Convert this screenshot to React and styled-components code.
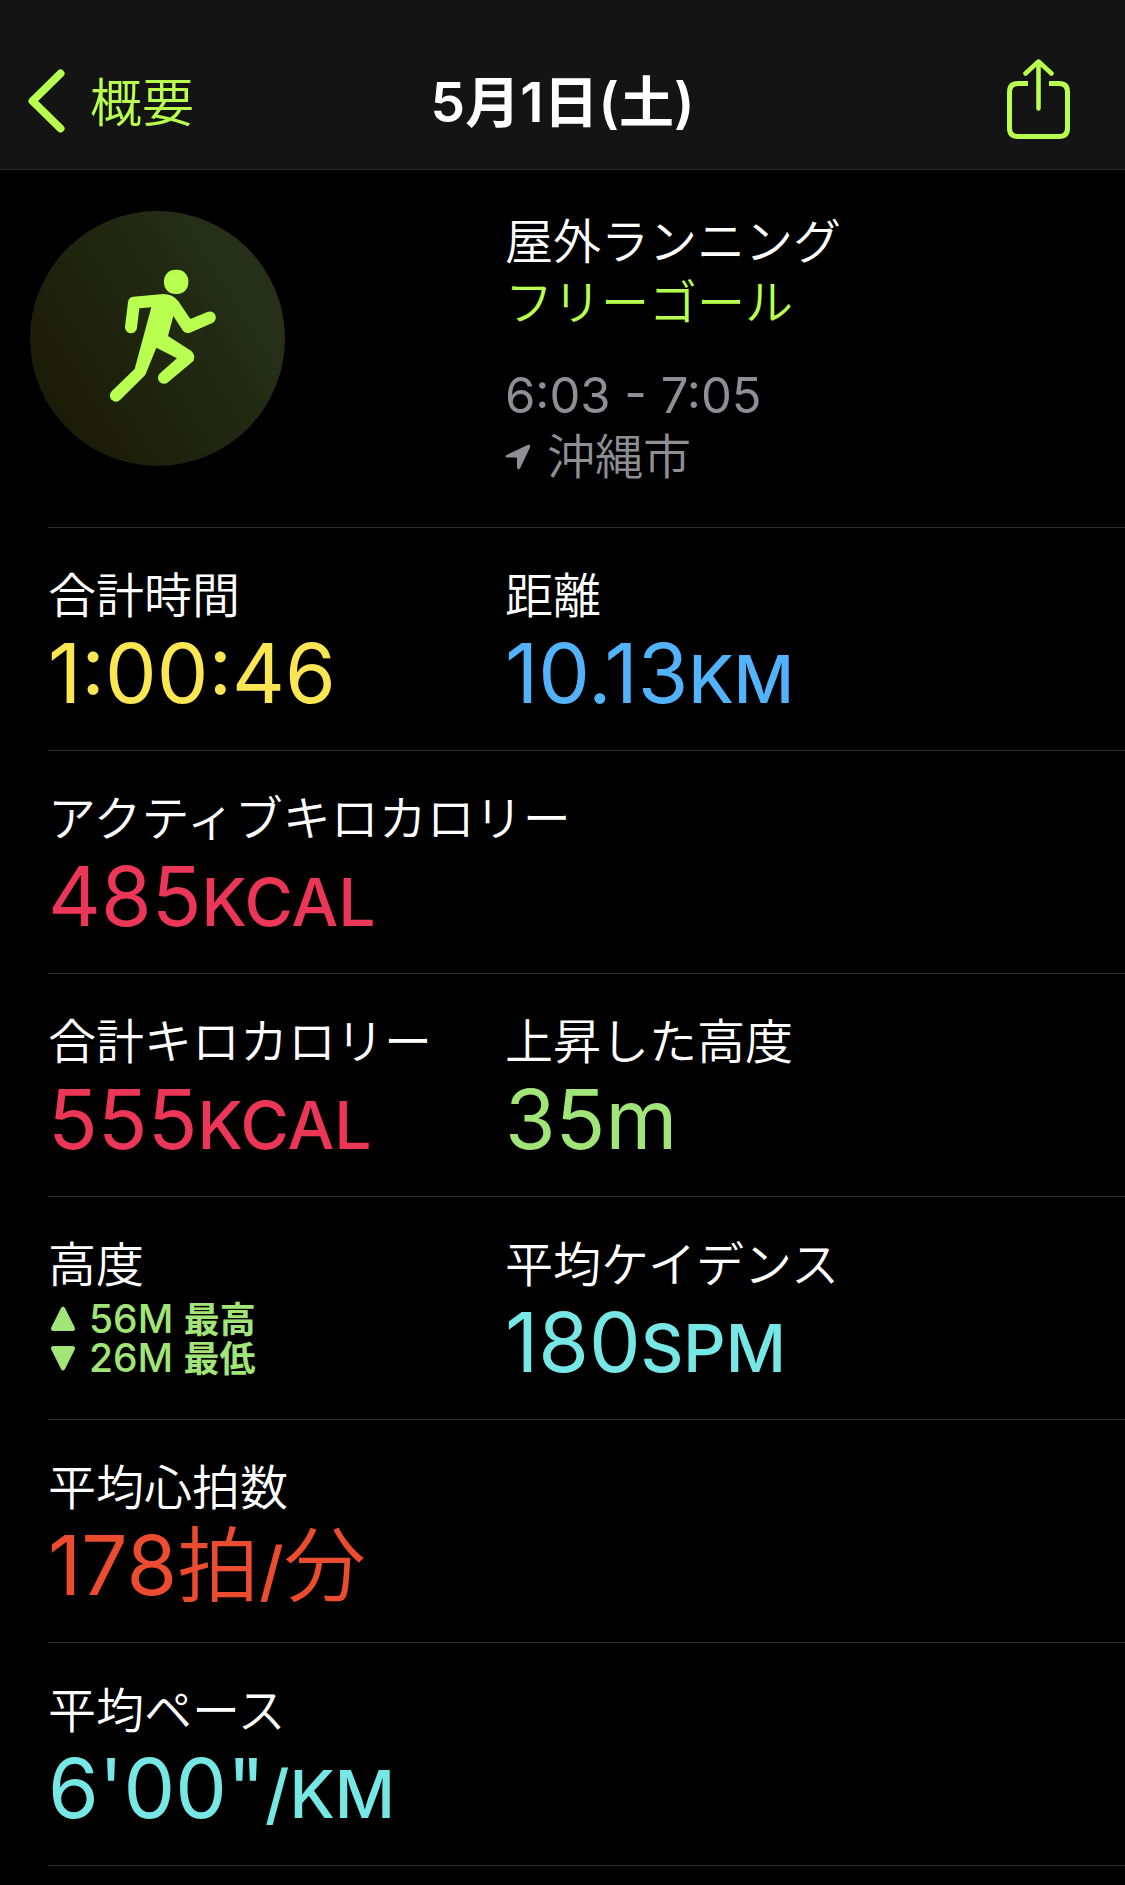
import React from "react";
import styled, { createGlobalStyle } from "styled-components";

const GlobalStyle = createGlobalStyle`
    * {
        box-sizing: border-box;
    }

    body {
        margin: 0;
        background-color: #000000;
        color: #ffffff;
        font-family: Inter, "Noto Sans CJK JP", sans-serif;
        font-weight: 350;
    }
`;

const Header = styled.header`
    display: grid;
    grid-template-columns: 1fr auto 1fr;
    align-items: start;
    padding: 59px 28px 30px;
    border-bottom: 1px solid #2a2a2a;
    background-color: #141414;
`;

const BackLink = styled.a`
    display: flex;
    gap: 25px;
    padding-top: 10px;
    color: #b9ff4f;
    font-size: 52px;
    line-height: 70px;
    text-decoration: none;
`;

const Title = styled.h1`
    margin: 0;
    padding-top: 8px;
    font-size: 55px;
    line-height: 70px;
    font-weight: 600;
`;

const ShareButton = styled.button`
    display: flex;
    justify-self: end;
    margin-right: 27px;
    padding: 0;
    border: none;
    background-color: transparent;
    color: #b9ff4f;
    cursor: pointer;
`;

const Row = styled.section`
    display: grid;
    grid-template-columns: ${(props) => (props.$wide ? "1fr" : "14fr 19fr")};
    margin-left: 48px;
    border-bottom: 1px solid #2e2e30;
`;

const Summary = styled(Row)`
    padding: 41px 0 40px;
`;

const Metrics = styled(Row).attrs({ as: "dl" })`
    margin-top: 0;
    margin-bottom: 0;
    padding: 36px 0 30px;
`;

const Badge = styled.svg`
    display: block;
    width: 255px;
    height: 255px;
    margin-left: -18px;
`;

const Details = styled.div`
    display: flex;
    flex-direction: column;
    font-size: 48px;
    line-height: 61px;
`;

const Activity = styled.h2`
    margin: 0;
    font-size: 48px;
    font-weight: 350;
`;

const Goal = styled.span`
    margin-bottom: 32px;
    color: #b9ff4f;
`;

const Time = styled.span`
    color: #8e8e93;
    font-size: 49px;
    font-weight: 400;
`;

const Place = styled.span`
    display: flex;
    align-items: center;
    gap: 16px;
    color: #8e8e93;
`;

const Label = styled.dt`
    font-size: 48px;
    line-height: 64px;
`;

const Value = styled.dd`
    margin: 0;
    color: ${(props) => props.$color};
    font-size: 82px;
    line-height: 92px;
    font-weight: 400;
`;

const Unit = styled.span`
    font-size: 66px;
    line-height: 1;
    font-weight: 500;
`;

const Kanji = styled.span`
    line-height: 1;
    font-weight: 350;
`;

const Elevations = styled.dd`
    margin: 0;
    padding-top: 2px;
    color: #a1e578;
    font-size: 39px;
    line-height: 39px;
    font-weight: 450;
`;

const Elevation = styled.div`
    display: flex;
    align-items: center;
    gap: 14px;
    padding-left: 3px;
`;

const Strong = styled.span`
    font-size: 36px;
    line-height: 1;
    font-weight: 600;
`;

const BackIcon = () => (
    <svg width="37" height="64" viewBox="0 0 37 64" fill="none" stroke="currentColor" strokeWidth="8" strokeLinecap="round" strokeLinejoin="round" aria-hidden="true">
        <path d="M32.500 4.500L4.500 32L32.500 59.500" />
    </svg>
);

const ShareIcon = () => (
    <svg width="63" height="80" viewBox="0 0 63 80" fill="none" stroke="currentColor" strokeWidth="5" aria-hidden="true">
        <path d="M21 24.500H11Q2.500 24.500 2.500 33V69Q2.500 77.500 11 77.500H52Q60.500 77.500 60.500 69V33Q60.500 24.500 52 24.500H42" />
        <path d="M31.500 49.500V2.500M18.500 14.500L31.500 2.500L44.500 14.500" strokeWidth="4.500" strokeLinecap="round" strokeLinejoin="round" />
    </svg>
);

const RunnerBadge = () => (
    <Badge viewBox="90 63 765 765" role="img" aria-label="ランニング">
        <defs>
            <linearGradient id="badge" x1="0.1" y1="0.75" x2="0.9" y2="0.25">
                <stop offset="0" stopColor="#1b1c08" />
                <stop offset="1" stopColor="#263018" />
            </linearGradient>
        </defs>
        <circle cx="472.500" cy="445.500" r="382.500" fill="url(#badge)" />
        <g fill="#b9ff4f">
            <rect x="492" y="239" width="73" height="73" rx="34" />
            <path d="M400 320L490 312Q518 312 535 334L571 387L622 366A17.500 17.500 0 0 1 637 399L570 428Q557 432 549 422L520 378L504 438L574 483Q587 495 580 513L504 577A18 18 0 0 1 480 550L531 505L469 473L438 550Q437 555 432 559L360 630A18 18 0 0 1 335 604L404 537L454 352L418 355L411 413A18 18 0 0 1 375 411L384 337Q385 322 400 320Z" />
        </g>
    </Badge>
);

const LocationIcon = () => (
    <svg width="26" height="26" viewBox="0 0 26 26" fill="currentColor" aria-hidden="true">
        <path d="M1.500 11L22.500 1Q26 0 25 3.500L15 24.500Q12.500 26.500 12 23.500V14.500Q12 13.500 11 13.500H2.500Q-1 13 1.500 11Z" />
    </svg>
);

const Triangle = ({ down }) => (
    <svg width="24" height="26" viewBox="0 0 24 26" fill="currentColor" aria-hidden="true">
        <path d={down ? "M2 1H22Q25 1.500 23.500 5L14 24Q12 27 10 24L0.500 5Q-1 1.500 2 1Z" : "M2 25H22Q25 24.500 23.500 21L14 2Q12 -1 10 2L0.500 21Q-1 24.500 2 25Z"} />
    </svg>
);

const Metric = ({ label, color, children }) => (
    <div>
        <Label>{label}</Label>
        <Value $color={color}>{children}</Value>
    </div>
);

const App = () => {
    return (
        <>
            <GlobalStyle />
            <Header>
                <BackLink href="#summary"><BackIcon />概要</BackLink>
                <Title>5月1日(土)</Title>
                <ShareButton type="button" aria-label="共有"><ShareIcon /></ShareButton>
            </Header>
            <main>
                <Summary>
                    <RunnerBadge />
                    <Details>
                        <Activity>屋外ランニング</Activity>
                        <Goal>フリーゴール</Goal>
                        <Time>6:03 - 7:05</Time>
                        <Place><LocationIcon />沖縄市</Place>
                    </Details>
                </Summary>
                <Metrics>
                    <Metric label="合計時間" color="#fae553">1:00:46</Metric>
                    <Metric label="距離" color="#52b3fb">10.13<Unit>KM</Unit></Metric>
                </Metrics>
                <Metrics $wide>
                    <Metric label="アクティブキロカロリー" color="#ec3657">485<Unit>KCAL</Unit></Metric>
                </Metrics>
                <Metrics>
                    <Metric label="合計キロカロリー" color="#ec3657">555<Unit>KCAL</Unit></Metric>
                    <Metric label="上昇した高度" color="#a1e578">35m</Metric>
                </Metrics>
                <Metrics>
                    <div>
                        <Label>高度</Label>
                        <Elevations>
                            <Elevation><Triangle /><span>56M <Strong>最高</Strong></span></Elevation>
                            <Elevation><Triangle down /><span>26M <Strong>最低</Strong></span></Elevation>
                        </Elevations>
                    </div>
                    <Metric label="平均ケイデンス" color="#76e7e4">180<Unit>SPM</Unit></Metric>
                </Metrics>
                <Metrics $wide>
                    <Metric label="平均心拍数" color="#eb4b2f">178<Kanji>拍</Kanji><Unit>/</Unit><Kanji>分</Kanji></Metric>
                </Metrics>
                <Metrics $wide>
                    <Metric label="平均ペース" color="#76e7e4">6'00"<Unit>/KM</Unit></Metric>
                </Metrics>
            </main>
        </>
    );
};

export default App;
